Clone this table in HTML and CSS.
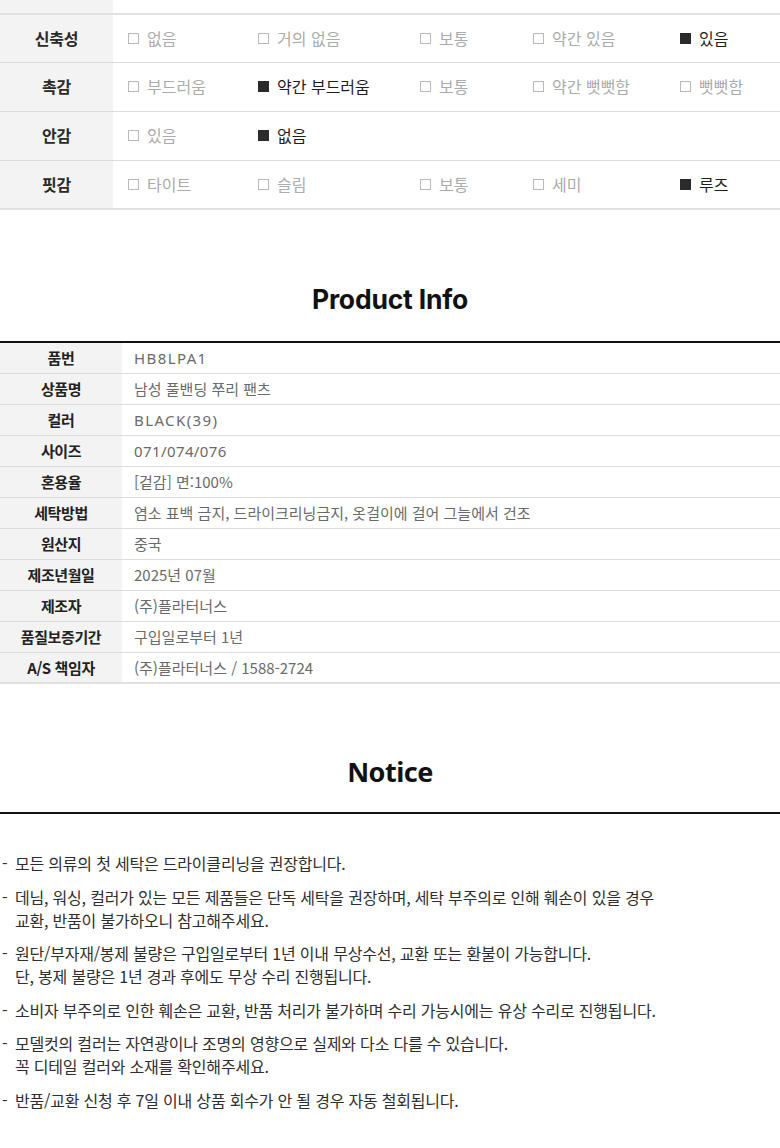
FILE: index.html
```html
<!DOCTYPE html>
<html lang="ko">
<head>
<meta charset="utf-8">
<link rel="stylesheet" href="styles.css">
</head>
<body>
<section class="spec">
  <div class="spec-row spec-top"><div class="spec-label"></div><div class="spec-opts"></div></div>
  <div class="spec-row spec-first">
    <div class="spec-label">신축성</div>
    <div class="spec-opts">
      <span class="opt"><i class="box"></i>없음</span>
      <span class="opt"><i class="box"></i>거의 없음</span>
      <span class="opt"><i class="box"></i>보통</span>
      <span class="opt"><i class="box"></i>약간 있음</span>
      <span class="opt on"><i class="box"></i>있음</span>
    </div>
  </div>
  <div class="spec-row">
    <div class="spec-label">촉감</div>
    <div class="spec-opts">
      <span class="opt"><i class="box"></i>부드러움</span>
      <span class="opt on"><i class="box"></i>약간 부드러움</span>
      <span class="opt"><i class="box"></i>보통</span>
      <span class="opt"><i class="box"></i>약간 뻣뻣함</span>
      <span class="opt"><i class="box"></i>뻣뻣함</span>
    </div>
  </div>
  <div class="spec-row">
    <div class="spec-label">안감</div>
    <div class="spec-opts">
      <span class="opt"><i class="box"></i>있음</span>
      <span class="opt on"><i class="box"></i>없음</span>
    </div>
  </div>
  <div class="spec-row spec-last">
    <div class="spec-label">핏감</div>
    <div class="spec-opts">
      <span class="opt"><i class="box"></i>타이트</span>
      <span class="opt"><i class="box"></i>슬림</span>
      <span class="opt"><i class="box"></i>보통</span>
      <span class="opt"><i class="box"></i>세미</span>
      <span class="opt on"><i class="box"></i>루즈</span>
    </div>
  </div>
</section>

<h2 class="heading heading-info">Product Info</h2>
<section class="info">
  <div class="info-row"><div class="info-label">품번</div><div class="info-value latin">HB8LPA1</div></div>
  <div class="info-row"><div class="info-label">상품명</div><div class="info-value">남성 풀밴딩 쭈리 팬츠</div></div>
  <div class="info-row"><div class="info-label">컬러</div><div class="info-value latin">BLACK(39)</div></div>
  <div class="info-row"><div class="info-label">사이즈</div><div class="info-value num">071/074/076</div></div>
  <div class="info-row"><div class="info-label">혼용율</div><div class="info-value">[겉감] 면:100%</div></div>
  <div class="info-row"><div class="info-label">세탁방법</div><div class="info-value">염소 표백 금지, 드라이크리닝금지, 옷걸이에 걸어 그늘에서 건조</div></div>
  <div class="info-row"><div class="info-label">원산지</div><div class="info-value">중국</div></div>
  <div class="info-row"><div class="info-label">제조년월일</div><div class="info-value">2025년 07월</div></div>
  <div class="info-row"><div class="info-label">제조자</div><div class="info-value">(주)플라터너스</div></div>
  <div class="info-row"><div class="info-label">품질보증기간</div><div class="info-value">구입일로부터 1년</div></div>
  <div class="info-row info-last"><div class="info-label">A/S 책임자</div><div class="info-value">(주)플라터너스 / 1588-2724</div></div>
</section>

<h2 class="heading heading-notice">Notice</h2>
<section class="notice">
  <ul class="notice-list">
    <li>모든 의류의 첫 세탁은 드라이클리닝을 권장합니다.</li>
    <li>데님, 워싱, 컬러가 있는 모든 제품들은 단독 세탁을 권장하며, 세탁 부주의로 인해 훼손이 있을 경우<br>교환, 반품이 불가하오니 참고해주세요.</li>
    <li>원단/부자재/봉제 불량은 구입일로부터 1년 이내 무상수선, 교환 또는 환불이 가능합니다.<br>단, 봉제 불량은 1년 경과 후에도 무상 수리 진행됩니다.</li>
    <li>소비자 부주의로 인한 훼손은 교환, 반품 처리가 불가하며 수리 가능시에는 유상 수리로 진행됩니다.</li>
    <li>모델컷의 컬러는 자연광이나 조명의 영향으로 실제와 다소 다를 수 있습니다.<br>꼭 디테일 컬러와 소재를 확인해주세요.</li>
    <li>반품/교환 신청 후 7일 이내 상품 회수가 안 될 경우 자동 철회됩니다.</li>
  </ul>
</section>
</body>
</html>
```

FILE: styles.css
```css
* { box-sizing: border-box; }
html, body { margin: 0; padding: 0; background: #fff; }
body {
  width: 780px;
  font-family: "Noto Sans CJK KR", "Noto Sans", sans-serif;
  color: #222;
}

/* ---- spec table ---- */
.spec { display: flex; flex-direction: column; }
.spec-row {
  display: flex;
  height: 49px;
  border-bottom: 1px solid #dcdcdc;
}
.spec-top { height: 15px; border-bottom: 2px solid #e2e2e2; }
.spec-first { height: 48px; }
.spec-last { border-bottom: 2px solid #e2e2e2; height: 49px; }
.spec-label {
  width: 113px;
  flex: none;
  background: #f3f3f3;
  display: flex;
  align-items: center;
  justify-content: center;
  font-size: 16px;
  font-weight: 700;
  color: #2a2a2a;
  letter-spacing: -0.3px;
  padding-bottom: 2px;
}
.spec-opts {
  flex: 1;
  display: grid;
  grid-template-columns: 130px 162px 113px 147px 1fr;
  align-items: center;
  padding-left: 15px;
  padding-bottom: 2px;
}
.opt {
  display: flex;
  align-items: center;
  gap: 8px;
  font-size: 16px;
  color: #ababab;
  letter-spacing: 0;
  white-space: nowrap;
}
.opt.on { color: #1e1e1e; }
.box {
  display: inline-block;
  width: 11px;
  height: 11px;
  border: 1px solid #b9b9b9;
  margin-top: 1px;
}
.opt.on .box { background: #2b2b2b; border-color: #2b2b2b; }

/* ---- headings ---- */
.heading {
  margin: 0;
  text-align: center;
  font-weight: 700;
  color: #111;
  line-height: 40px;
}
.heading-info {
  font-family: "Inter", "Noto Sans", sans-serif;
  font-size: 26.5px;
  letter-spacing: -0.2px;
  margin-top: 69px;
  margin-bottom: 22px;
}
.heading-notice {
  font-family: "Noto Sans", sans-serif;
  font-size: 27px;
  letter-spacing: -0.5px;
  margin-top: 68px;
  margin-bottom: 20px;
}

/* ---- product info ---- */
.info {
  border-top: 2px solid #111;
  display: flex;
  flex-direction: column;
}
.info-row {
  display: flex;
  height: 31px;
  border-bottom: 1px solid #dcdcdc;
}
.info-last { border-bottom: 2px solid #e0e0e0; height: 31px; }
.info-label {
  width: 122px;
  flex: none;
  background: #f3f3f3;
  display: flex;
  align-items: center;
  justify-content: center;
  font-size: 15px;
  font-weight: 700;
  color: #222;
  letter-spacing: -0.4px;
  padding-bottom: 1px;
}
.info-value {
  display: flex;
  align-items: center;
  padding-left: 12px;
  padding-bottom: 1px;
  font-size: 15px;
  color: #6a6a6a;
  letter-spacing: 0;
  white-space: nowrap;
}
.info-value.latin {
  font-family: "Noto Sans", "Noto Sans CJK KR", sans-serif;
  letter-spacing: 1.4px;
}
.info-value.num {
  font-family: "Noto Sans", "Noto Sans CJK KR", sans-serif;
  letter-spacing: 0.4px;
}

/* ---- notice ---- */
.notice {
  border-top: 2px solid #111;
  padding-top: 38px;
}
.notice-list {
  list-style: none;
  margin: 0;
  padding: 0;
  display: flex;
  flex-direction: column;
  gap: 10.5px;
}
.notice-list li {
  display: grid;
  grid-template-columns: 15px 1fr;
  font-size: 16px;
  line-height: 23px;
  color: #2e2e2e;
  letter-spacing: -0.2px;
}
.notice-list li::before {
  content: "-";
  padding-left: 2px;
}
```
